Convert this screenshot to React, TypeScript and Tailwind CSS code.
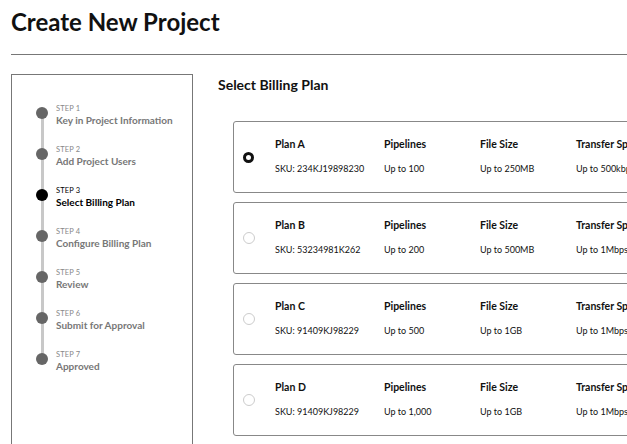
import React from "react";

const steps = [
  "Key in Project Information",
  "Add Project Users",
  "Select Billing Plan",
  "Configure Billing Plan",
  "Review",
  "Submit for Approval",
  "Approved",
];

const plans = [
  { name: "Plan A", sku: "234KJ19898230", pipes: "Up to 100", size: "Up to 250MB", speed: "Up to 500kbps", selected: true },
  { name: "Plan B", sku: "53234981K262", pipes: "Up to 200", size: "Up to 500MB", speed: "Up to 1Mbps" },
  { name: "Plan C", sku: "91409KJ98229", pipes: "Up to 500", size: "Up to 1GB", speed: "Up to 1Mbps" },
  { name: "Plan D", sku: "91409KJ98229", pipes: "Up to 1,000", size: "Up to 1GB", speed: "Up to 1Mbps" },
];

export default function App() {
  const current = 2;
  return (
    <div className="h-[444px] w-[627px] overflow-hidden bg-white font-['Lato',sans-serif] text-[#111]">
      <div className="pl-[11px]">
        <h1 className="pt-[6px] text-[24px] font-bold leading-[32px]">Create New Project</h1>
        <div className="mt-[16px] h-px w-[700px] bg-[#777]" />

        <div className="mt-[19px] flex">
          <div className="h-[400px] w-[182px] shrink-0 border border-[#777] pt-[30px] pl-[24px]">
            <div className="relative">
              <div className="absolute left-[5px] top-[8px] h-[248px] w-[3px] bg-[#c8c8c8]" />
              {steps.map((s, i) => (
                <div key={s} className="relative flex h-[41px] items-start">
                  <div className="mt-[2px] flex w-[20px] shrink-0">
                    <div className={`h-[12px] w-[12px] rounded-full ${i === current ? "bg-black" : "bg-[#666]"}`} />
                  </div>
                  <div className="leading-none">
                    <div className={`text-[7.5px] tracking-[0.02em] ${i === current ? "text-black" : "text-[#888]"}`}>STEP {i + 1}</div>
                    <div className={`mt-[2px] text-[10px] font-bold ${i === current ? "text-black" : "text-[#777]"}`}>{s}</div>
                  </div>
                </div>
              ))}
            </div>
          </div>

          <div className="ml-[25px] shrink-0">
            <h2 className="mt-[1px] text-[14px] font-bold leading-[20px]">Select Billing Plan</h2>
            <div className="ml-[15px] mt-[26px] flex flex-col gap-[9px]">
              {plans.map((p) => (
                <div key={p.name} className="flex h-[72px] w-[500px] items-center rounded-[3px] border border-[#888]">
                  <div className="flex w-[41px] shrink-0 pl-[9px]">
                    {p.selected ? (
                      <div className="h-[11px] w-[11px] rounded-full border-[3.5px] border-[#111]" />
                    ) : (
                      <div className="h-[12px] w-[12px] rounded-full border border-[#ccc]" />
                    )}
                  </div>
                  <div className="mb-[2px] grid shrink-0 grid-cols-[109px_96px_96px_120px] items-baseline gap-y-[13px]">
                    <div className="text-[10.5px] font-bold leading-[12px]">{p.name}</div>
                    <div className="text-[10.5px] font-bold leading-[12px]">Pipelines</div>
                    <div className="text-[10.5px] font-bold leading-[12px]">File Size</div>
                    <div className="text-[10.5px] font-bold leading-[12px]">Transfer Speed</div>
                    <div className="text-[9px] leading-[12px]">SKU: {p.sku}</div>
                    <div className="text-[9px] leading-[12px]">{p.pipes}</div>
                    <div className="text-[9px] leading-[12px]">{p.size}</div>
                    <div className="text-[9px] leading-[12px]">{p.speed}</div>
                  </div>
                </div>
              ))}
            </div>
          </div>
        </div>
      </div>
    </div>
  );
}
